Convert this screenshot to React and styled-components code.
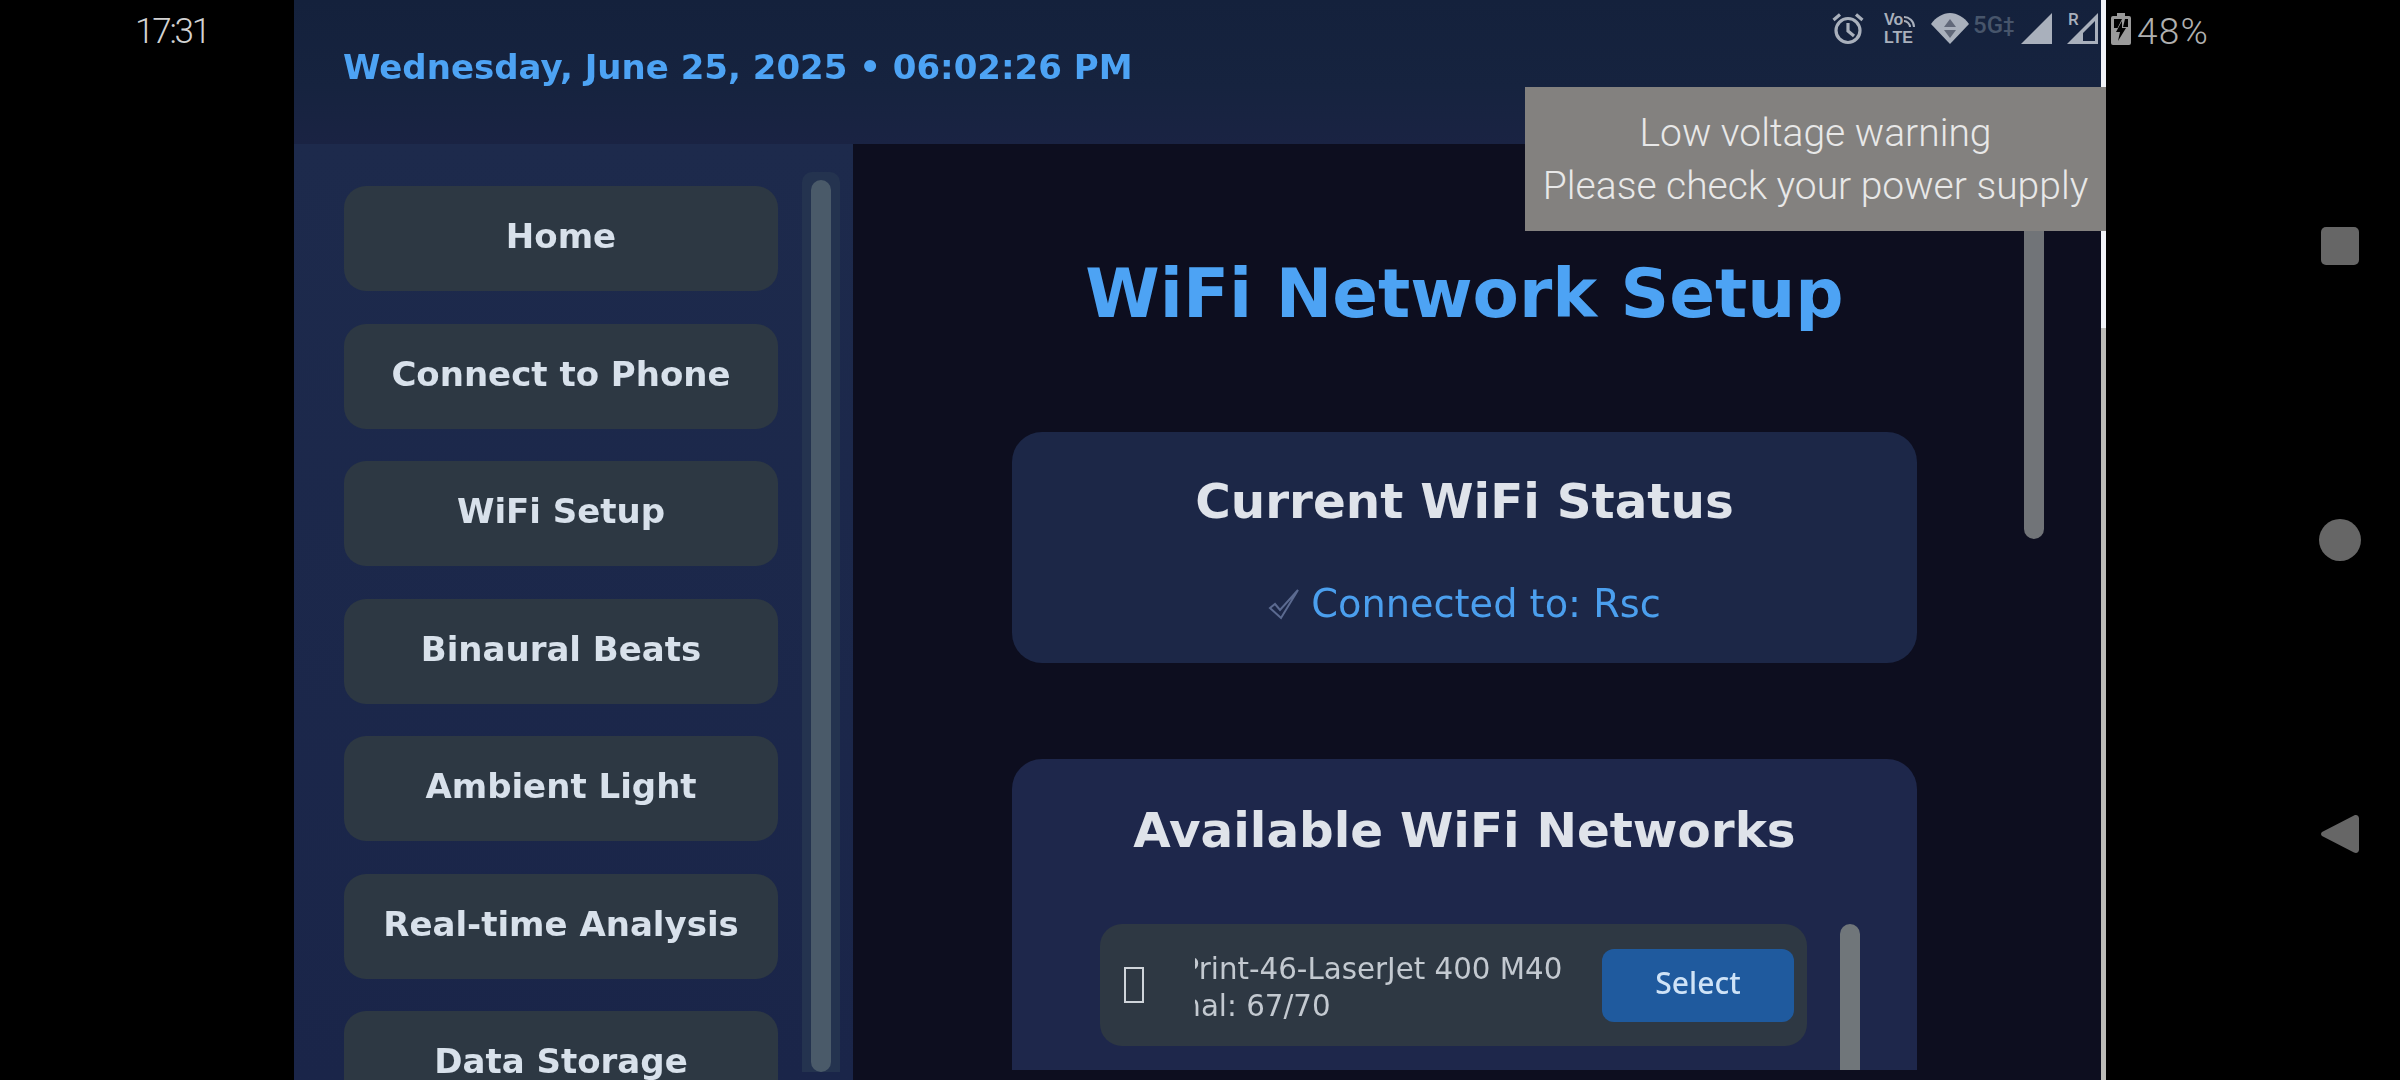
import React from "react";
import styled, { createGlobalStyle } from "styled-components";

const menuItems = [
  "Home",
  "Connect to Phone",
  "WiFi Setup",
  "Binaural Beats",
  "Ambient Light",
  "Real-time Analysis",
  "Data Storage",
];

const App = () => {
  return (
    <Screen>
      <GlobalStyle />
      <LeftBezel>
        <Clock>17:31</Clock>
      </LeftBezel>

      <Kiosk>
        <Header>
          <DateLine>Wednesday, June 25, 2025 • 06:02:26 PM</DateLine>
        </Header>
        <Body>
          <Sidebar>
            <Menu>
              {menuItems.map((item) => (
                <MenuButton key={item}>{item}</MenuButton>
              ))}
            </Menu>
            <SideTrack>
              <SideThumb />
            </SideTrack>
          </Sidebar>
          <Main>
            <Column>
              <Title>WiFi Network Setup</Title>
              <StatusCard>
                <CardTitle>Current WiFi Status</CardTitle>
                <Connected>
                  <Tick viewBox="0 0 34 32">
                    <path d="M2 20l5-4 5 6L30 2 13 30z" />
                  </Tick>
                  Connected to: Rsc
                </Connected>
              </StatusCard>
              <NetworksCard>
                <CardTitle>Available WiFi Networks</CardTitle>
                <NetworkRow>
                  <MissingGlyph />
                  <NetworkClip>
                    <NetworkName $shift={63}>HP-Print-46-LaserJet 400 M40</NetworkName>
                    <NetworkName $shift={58}>Signal: 67/70</NetworkName>
                  </NetworkClip>
                  <SelectButton>Select</SelectButton>
                </NetworkRow>
                <ListThumb />
              </NetworksCard>
            </Column>
            <MainThumb />
          </Main>
        </Body>
      </Kiosk>

      <EdgeLine>
        <EdgeBright />
      </EdgeLine>

      <RightBezel>
        <BatteryRow>
          <svg width="20" height="32" viewBox="0 0 20 32">
            <path
              fill="#9a9a9a"
              fillRule="evenodd"
              d="M6 0h8v3h4a2 2 0 0 1 2 2v25a2 2 0 0 1-2 2H2a2 2 0 0 1-2-2V5a2 2 0 0 1 2-2h4zM3 6v9h3.5L11 6zM17 6h-3l-2 8h5z"
            />
            <path fill="#000" d="M11 8L5 19h4l-2 9 8-13h-4z" />
          </svg>
          <Percent>48%</Percent>
        </BatteryRow>
        <NavKeys>
          <NavSlot>
            <SquareKey />
          </NavSlot>
          <NavSlot>
            <RoundKey />
          </NavSlot>
          <NavSlot>
            <svg width="38" height="42" viewBox="0 0 38 42">
              <path
                fill="#666"
                d="M1 19L33 2.500C35.500 1.200 38 2.600 38 5.500V36.500C38 39.400 35.500 40.800 33 39.500L1 23C-.3 22 -.3 20 1 19z"
              />
            </svg>
          </NavSlot>
        </NavKeys>
      </RightBezel>

      <StatusIcons>
        <svg width="32" height="33" viewBox="0 0 32 33">
          <g fill="none" stroke="#a9b0bc" strokeWidth="3.200">
            <circle cx="16" cy="18.500" r="12" />
            <path d="M16 11v8l6 5" />
            <path d="M1.500 8L8 2.500M30.500 8L24 2.500" />
          </g>
        </svg>
        <VoLte>
          <VoLine>
            Vo
            <svg width="13" height="13" viewBox="0 0 13 13">
              <path
                d="M1 2c5 0 10 4 10 10M1 6c3 0 6 3 6 6"
                fill="none"
                stroke="#a9b0bc"
                strokeWidth="2"
              />
            </svg>
          </VoLine>
          <LteLine>LTE</LteLine>
        </VoLte>
        <WifiIcon width="38" height="31" viewBox="0 0 38 31">
          <path fill="#a9b0bc" d="M0 11C5 4 12 0 19 0s14 4 19 11L19 31z" />
          <path fill="#62697a" d="M19 6l6 8H13zM13 17h12l-6 8z" />
        </WifiIcon>
        <FiveG>
          5G
          <Plus>‡</Plus>
        </FiveG>
        <Signal width="31" height="31" viewBox="0 0 31 31">
          <path fill="#a9b0bc" d="M0 31L31 0v31z" />
        </Signal>
        <RoamSignal>
          <RoamLetter>R</RoamLetter>
          <svg width="31" height="31" viewBox="0 0 31 31">
            <path
              fill="#a9b0bc"
              fillRule="evenodd"
              d="M0 31L31 0v31zM16 28h12V8L16 20z"
            />
          </svg>
        </RoamSignal>
      </StatusIcons>

      <Toast>
        <ToastLine>Low voltage warning</ToastLine>
        <ToastLine>Please check your power supply</ToastLine>
      </Toast>
    </Screen>
  );
};

// Styled Component

const GlobalStyle = createGlobalStyle`
  html, body {
    margin: 0;
    background: #000;
    overflow: hidden;
  }
  * {
    box-sizing: border-box;
  }
`;

const Screen = styled.div`
  position: relative;
  display: flex;
  width: 2400px;
  height: 1080px;
  overflow: hidden;
  background: #000;
  font-family: "DejaVu Sans", sans-serif;
`;

const LeftBezel = styled.div`
  width: 294px;
  flex-shrink: 0;
  padding: 13px 0 0 135px;
`;

const Clock = styled.div`
  font-family: Roboto, sans-serif;
  font-weight: 300;
  font-size: 35px;
  line-height: 38px;
  letter-spacing: -2.200px;
  color: #d2d2d2;
`;

const Kiosk = styled.div`
  width: 1807px;
  flex-shrink: 0;
  display: flex;
  flex-direction: column;
  filter: blur(0.6px);
`;

const Header = styled.div`
  height: 144px;
  flex-shrink: 0;
  padding: 47px 0 0 49px;
  background: linear-gradient(180deg, #14213c 0%, #16233f 60%, #1a2343 100%);
`;

const DateLine = styled.div`
  font-weight: 700;
  font-size: 34px;
  line-height: 40px;
  color: #4da3f4;
`;

const Body = styled.div`
  flex: 1;
  display: flex;
  min-height: 0;
`;

const Sidebar = styled.div`
  width: 559px;
  flex-shrink: 0;
  display: flex;
  gap: 24px;
  padding: 28px 0 0 50px;
  overflow: hidden;
  background: linear-gradient(180deg, #1d2a4c 0%, #1a2549 100%);
`;

const Menu = styled.div`
  width: 434px;
  flex-shrink: 0;
  padding-top: 14px;
  display: flex;
  flex-direction: column;
  gap: 32.500px;
`;

const MenuButton = styled.div`
  height: 105px;
  flex-shrink: 0;
  padding-bottom: 5px;
  display: flex;
  align-items: center;
  justify-content: center;
  border-radius: 22px;
  background: #2d3843;
  font-weight: 700;
  font-size: 34px;
  color: #d8e1eb;
`;

const SideTrack = styled.div`
  width: 38px;
  height: 900px;
  flex-shrink: 0;
  padding: 8px 9px;
  border-radius: 10px 10px 0 0;
  background: #24334f;
`;

const SideThumb = styled.div`
  height: 892px;
  border-radius: 10px;
  background: #4a5a69;
`;

const Main = styled.div`
  position: relative;
  flex: 1;
  min-width: 0;
  padding: 0 0 10px 159px;
  background: #0d0e1f;
`;

const Column = styled.div`
  width: 905px;
  height: 100%;
  overflow: hidden;
  display: flex;
  flex-direction: column;
`;

const Title = styled.h1`
  margin: 110px 0 0;
  font-weight: 700;
  font-size: 67.500px;
  line-height: 80px;
  text-align: center;
  color: #4da3f4;
`;

const StatusCard = styled.div`
  margin-top: 98px;
  height: 231px;
  flex-shrink: 0;
  padding-top: 39px;
  border-radius: 30px;
  background: #1c2747;
  text-align: center;
`;

const CardTitle = styled.div`
  font-weight: 700;
  font-size: 48.400px;
  line-height: 60px;
  color: #dfe3ea;
`;

const Connected = styled.div`
  margin-top: 48px;
  display: flex;
  align-items: center;
  justify-content: center;
  gap: 9px;
  font-size: 38.300px;
  line-height: 50px;
  color: #4b9fee;
`;

const Tick = styled.svg`
  width: 34px;
  height: 32px;
  fill: none;
  stroke: #5b6a90;
  stroke-width: 2;
`;

const NetworksCard = styled.div`
  position: relative;
  margin-top: 96px;
  flex: 1;
  padding-top: 41px;
  border-radius: 30px 30px 0 0;
  background: #1e274b;
  text-align: center;
`;

const NetworkRow = styled.div`
  width: 707px;
  height: 122px;
  margin: 64px 0 0 88px;
  padding: 0 14px 0 24px;
  display: flex;
  align-items: center;
  border-radius: 22px;
  background: #2e3843;
`;

const MissingGlyph = styled.span`
  width: 20px;
  height: 36px;
  flex-shrink: 0;
  border: 2px solid #cfd4da;
`;

const NetworkClip = styled.div`
  width: 407px;
  margin-left: 51px;
  padding-top: 5px;
  flex-shrink: 0;
  overflow: hidden;
  text-align: left;
`;

const NetworkName = styled.div`
  margin-left: ${(p) => -p.$shift}px;
  font-size: 29.300px;
  line-height: 37px;
  white-space: nowrap;
  color: #c3c9d0;
`;

const SelectButton = styled.div`
  width: 192px;
  height: 73px;
  padding-bottom: 5px;
  flex-shrink: 0;
  display: flex;
  align-items: center;
  justify-content: center;
  border-radius: 12px;
  background: #1f5a9e;
  font-family: "Noto Sans", sans-serif;
  font-weight: 500;
  font-size: 30px;
  color: #cfe3f7;
`;

const ListThumb = styled.div`
  position: absolute;
  top: 165px;
  right: 57px;
  bottom: 0;
  width: 20px;
  border-radius: 10px 10px 0 0;
  background: #70767a;
`;

const MainThumb = styled.div`
  position: absolute;
  top: 0;
  right: 57px;
  width: 20px;
  height: 395px;
  border-radius: 0 0 10px 10px;
  background: #717478;
`;

const EdgeLine = styled.div`
  width: 5px;
  flex-shrink: 0;
  background: #bcbcb8;
`;

const EdgeBright = styled.div`
  height: 328px;
  background: #f1f3f8;
`;

const RightBezel = styled.div`
  flex: 1;
  padding: 13px 41px 0 5px;
  display: flex;
  flex-direction: column;
`;

const BatteryRow = styled.div`
  height: 32px;
  display: flex;
  align-items: center;
  gap: 6px;
`;

const Percent = styled.span`
  font-family: Roboto, sans-serif;
  font-weight: 300;
  font-size: 37px;
  line-height: 32px;
  letter-spacing: 1.200px;
  padding-top: 5px;
  color: #b0b0b0;
`;

const NavKeys = styled.div`
  margin-top: 180px;
  display: flex;
  flex-direction: column;
  gap: 252px;
`;

const NavSlot = styled.div`
  height: 42px;
  display: flex;
  align-items: center;
  justify-content: flex-end;
`;

const SquareKey = styled.div`
  width: 38px;
  height: 38px;
  border-radius: 5px;
  background: #666;
`;

const RoundKey = styled.div`
  width: 42px;
  height: 42px;
  margin-right: -2px;
  border-radius: 50%;
  background: #666;
`;

const StatusIcons = styled.div`
  position: absolute;
  top: 12px;
  left: 1832px;
  display: flex;
  align-items: flex-start;
  color: #a9b0bc;
`;

const VoLte = styled.div`
  margin-left: 20px;
  width: 36px;
  font-family: "Liberation Sans", sans-serif;
  font-weight: 700;
`;

const VoLine = styled.div`
  display: flex;
  align-items: flex-end;
  height: 16px;
  font-size: 16px;
  line-height: 16px;
`;

const LteLine = styled.div`
  margin-top: 2px;
  font-size: 16px;
  line-height: 15px;
`;

const WifiIcon = styled.svg`
  margin-left: 11px;
  margin-top: 1px;
`;

const FiveG = styled.div`
  margin-left: 4px;
  width: 46px;
  display: flex;
  font-family: Roboto, sans-serif;
  font-weight: 500;
  font-size: 24px;
  line-height: 26px;
  color: #47556b;
`;

const Plus = styled.span`
  font-size: 20px;
`;

const Signal = styled.svg`
  margin-left: 2px;
  margin-top: 1px;
`;

const RoamSignal = styled.div`
  position: relative;
  margin-left: 15px;
  margin-top: 1px;
  line-height: 0;
`;

const RoamLetter = styled.span`
  position: absolute;
  top: -3px;
  left: 1px;
  font-family: Roboto, sans-serif;
  font-weight: 500;
  font-size: 17px;
  line-height: 18px;
  color: #a9b0bc;
`;

const Toast = styled.div`
  position: absolute;
  top: 87px;
  left: 1525px;
  width: 581px;
  height: 144px;
  padding-top: 2px;
  display: flex;
  flex-direction: column;
  align-items: center;
  justify-content: center;
  background: #83817f;
`;

const ToastLine = styled.div`
  font-family: Roboto, sans-serif;
  font-weight: 300;
  font-size: 39px;
  line-height: 53px;
  color: #e8e8e8;
  white-space: nowrap;
`;

export default App;
